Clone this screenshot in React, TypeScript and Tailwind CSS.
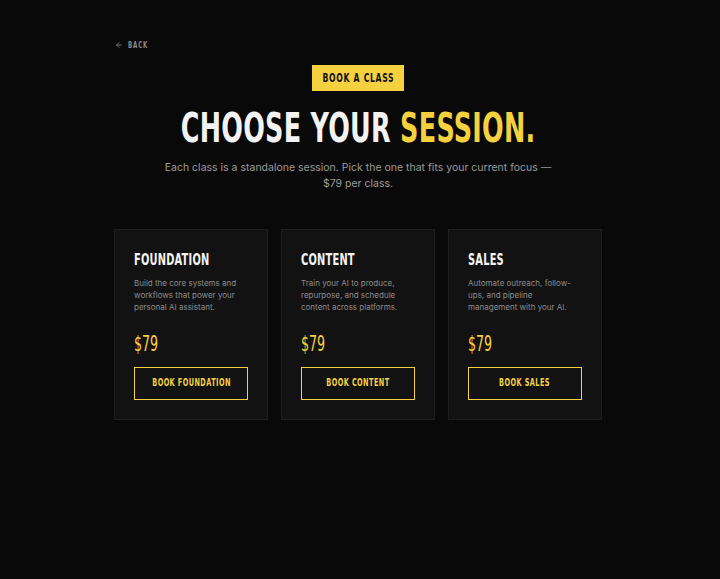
import { ArrowLeft } from "lucide-react";

const display = "font-['DejaVu_Sans_Condensed','Liberation_Sans',sans-serif]";
const body = "font-['Inter','Noto_Sans',sans-serif]";

const sessions = [
  {
    title: "FOUNDATION",
    desc: "Build the core systems and workflows that power your personal AI assistant.",
    cta: "BOOK FOUNDATION",
  },
  {
    title: "CONTENT",
    desc: "Train your AI to produce, repurpose, and schedule content across platforms.",
    cta: "BOOK CONTENT",
  },
  {
    title: "SALES",
    desc: "Automate outreach, follow-ups, and pipeline management with your AI.",
    cta: "BOOK SALES",
  },
];

export default function App() {
  return (
    <div className="min-h-[579px] w-full bg-[#090909] text-white">
      <div className="ml-[114px] w-[488px] pt-[38px]">
        {/* Back */}
        <button className={`flex items-center gap-[5px] pl-[1px] text-[9px] font-bold leading-[14px] tracking-[0.14em] text-[#8a8a8a] ${display}`}>
          <ArrowLeft className="h-[8px] w-[8px]" strokeWidth={2.25} />
          <span className="inline-block origin-left scale-x-[0.68]">BACK</span>
        </button>

        {/* Hero */}
        <div className="mt-[13px] flex flex-col items-center text-center">
          <span className={`flex h-[26px] w-[92px] items-center justify-center bg-[#f6d13f] text-[13px] font-bold tracking-[0.08em] text-[#111] ${display}`}>
            <span className="inline-block scale-x-[0.66] whitespace-nowrap">BOOK A CLASS</span>
          </span>
          <h1 className={`mt-[13px] flex w-full justify-center whitespace-nowrap text-[41px] font-bold leading-[48px] tracking-[0.01em] text-[#f3f3f3] ${display}`}>
            <span className="inline-block scale-x-[0.69]">
              CHOOSE YOUR <span className="text-[#f6d13f]">SESSION.</span>
            </span>
          </h1>
          <p className={`mt-[8px] w-[400px] text-[10.5px] leading-[16px] text-[#9a9a9a] ${body}`}>
            Each class is a standalone session. Pick the one that fits your current focus — $79 per class.
          </p>
        </div>

        {/* Sessions */}
        <div className="mt-[37px] grid grid-cols-3 gap-[13px]">
          {sessions.map((s) => (
            <div key={s.title} className="border border-[#1e1e1e] bg-[#121212] px-[19px] pb-[19px] pt-[20px]">
              <h2 className={`whitespace-nowrap text-[15px] font-bold leading-[20px] tracking-[0.02em] text-[#f3f3f3] ${display}`}>
                <span className="inline-block origin-left scale-x-[0.73]">{s.title}</span>
              </h2>
              <p className={`mt-[7px] h-[36px] text-[8px] leading-[12px] text-[#8c8c8c] ${body}`}>{s.desc}</p>
              <p className={`mt-[18px] text-[21px] leading-[26px] text-[#f6d13f] ${display}`}>
                <span className="inline-block origin-left scale-x-[0.67]">$79</span>
              </p>
              <button
                className={`mt-[10px] flex h-[33px] w-full items-center justify-center border-[1.5px] border-[#f6d13f] text-[11px] font-bold tracking-[0.06em] text-[#f6d13f] ${display}`}
              >
                <span className="inline-block scale-x-[0.66] whitespace-nowrap">{s.cta}</span>
              </button>
            </div>
          ))}
        </div>
      </div>
    </div>
  );
}
